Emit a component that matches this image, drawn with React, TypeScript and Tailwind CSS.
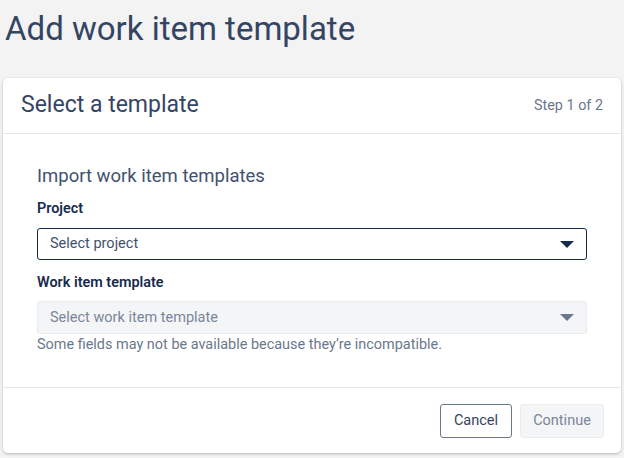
import React from "react";

function Caret({ className }: { className?: string }) {
  return (
    <svg width="14" height="7" viewBox="0 0 14 7" className={className}>
      <path d="M0 0 L14 0 L7 7 Z" fill="currentColor" />
    </svg>
  );
}

export default function App() {
  return (
    <div
      className="w-[624px] h-[458px] bg-[#f3f3f3] overflow-hidden text-[#172b4d]"
      style={{ fontFamily: "Roboto, 'Liberation Sans', sans-serif" }}
    >
      <h1 className="pl-[5px] pt-[7px] h-[78px] text-[33px] leading-[44px] font-normal text-[#344563]">
        Add work item template
      </h1>
      <div className="mx-[3px] bg-white rounded-[5px] shadow-[0_1px_3px_rgba(0,0,0,0.25)]">
        <div className="flex items-center justify-between h-[56px] px-[18px] border-b border-[#e4e6ea]">
          <span className="text-[23px] text-[#344563]">Select a template</span>
          <span className="text-[14.4px] text-[#6b778c]">Step 1 of 2</span>
        </div>
        <div className="px-[34px] pt-[30px] pb-[32px] border-b border-[#e4e6ea]">
          <div className="text-[18.5px] leading-[24px] text-[#42526e]">Import work item templates</div>
          <div className="mt-[11px] text-[14.4px] leading-[20px] font-semibold text-[#172b4d]">Project</div>
          <div className="mt-[9px] h-[32px] flex items-center justify-between px-[12px] border border-[#172b4d] rounded-[3px] bg-white">
            <span className="text-[14.5px] text-[#42526e]">Select project</span>
            <Caret className="text-[#172b4d]" />
          </div>
          <div className="mt-[13px] text-[14.4px] leading-[20px] font-semibold text-[#172b4d]">Work item template</div>
          <div className="mt-[8px] h-[33px] flex items-center justify-between px-[12px] border border-[#ebecf0] rounded-[3px] bg-[#f4f5f7]">
            <span className="text-[14.5px] text-[#7a869a]">Select work item template</span>
            <Caret className="text-[#6b778c]" />
          </div>
          <div className="mt-[1px] text-[14.45px] leading-[20px] text-[#6b778c]">
            Some fields may not be available because they’re incompatible.
          </div>
        </div>
        <div className="flex justify-end gap-[8px] px-[17px] pt-[16px] pb-[15px]">
          <button className="h-[34px] w-[72px] border border-[#6b778c] rounded-[3px] bg-white text-[14.5px] text-[#344563]">
            Cancel
          </button>
          <button className="h-[34px] w-[84px] border border-[#ebecf0] rounded-[3px] bg-[#f4f5f7] text-[14.5px] text-[#7a869a]">
            Continue
          </button>
        </div>
      </div>
    </div>
  );
}
